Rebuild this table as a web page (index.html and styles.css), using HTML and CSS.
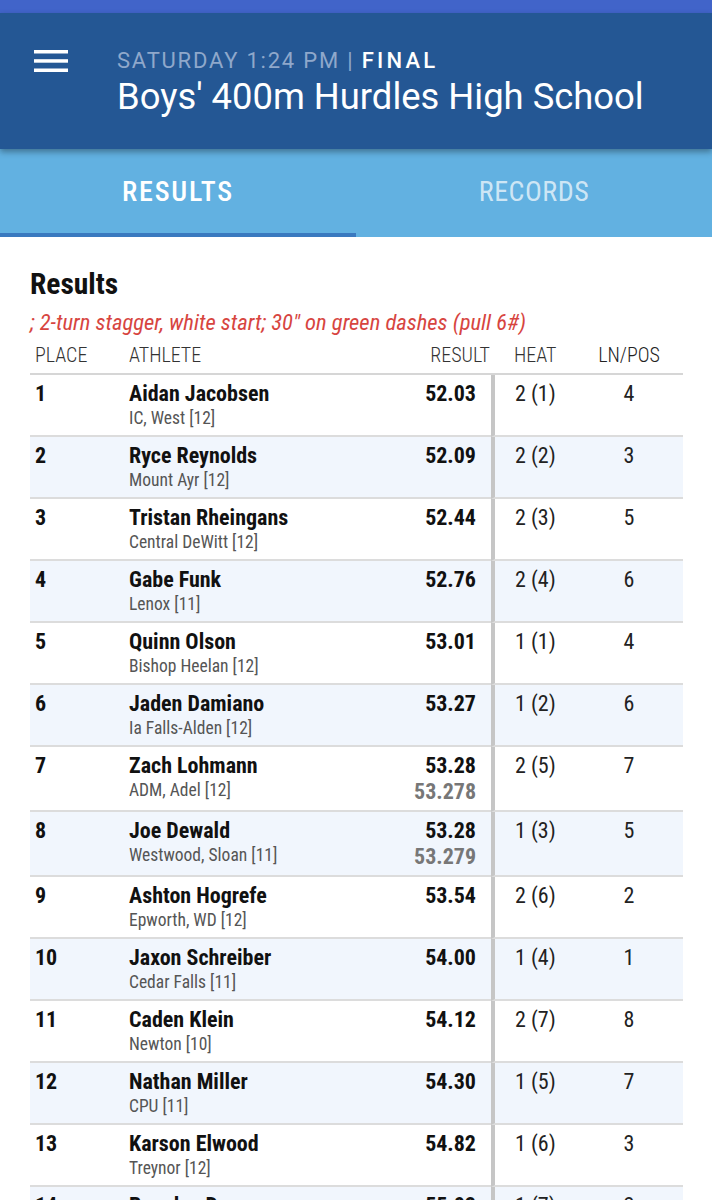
FILE: index.html
```html
<!DOCTYPE html>
<html lang="en">
<head>
<meta charset="utf-8">
<title>Boys' 400m Hurdles High School</title>
<link rel="stylesheet" href="styles.css">
</head>
<body>
<div class="topbar"></div>
<header class="appbar">
  <button class="menu" aria-label="Menu">
    <svg width="34" height="24" viewBox="0 0 34 24"><rect x="0" y="1" width="34" height="3.5" fill="#fff"/><rect x="0" y="10.2" width="34" height="3.5" fill="#fff"/><rect x="0" y="19.5" width="34" height="3.5" fill="#fff"/></svg>
  </button>
  <div class="titles">
    <div class="meta">SATURDAY 1:24 PM | <b>FINAL</b></div>
    <h1 class="title">Boys' 400m Hurdles High School</h1>
  </div>
</header>
<nav class="tabs">
  <div class="tab active">RESULTS</div>
  <div class="tab">RECORDS</div>
</nav>
<main class="content">
  <h2 class="heading">Results</h2>
  <p class="note">; 2-turn stagger, white start; 30" on green dashes (pull 6#)</p>
  <table class="results">
    <thead>
      <tr><th class="c-place">PLACE</th><th class="c-ath">ATHLETE</th><th class="c-res">RESULT</th><th class="c-heat">HEAT</th><th class="c-ln">LN/POS</th></tr>
    </thead>
    <tbody>
      <tr><td class="c-place">1</td><td class="c-ath"><div class="name">Aidan Jacobsen</div><div class="team">IC, West [12]</div></td><td class="c-res"><div class="mark">52.03</div></td><td class="c-heat">2 (1)</td><td class="c-ln">4</td></tr>
      <tr><td class="c-place">2</td><td class="c-ath"><div class="name">Ryce Reynolds</div><div class="team">Mount Ayr [12]</div></td><td class="c-res"><div class="mark">52.09</div></td><td class="c-heat">2 (2)</td><td class="c-ln">3</td></tr>
      <tr><td class="c-place">3</td><td class="c-ath"><div class="name">Tristan Rheingans</div><div class="team">Central DeWitt [12]</div></td><td class="c-res"><div class="mark">52.44</div></td><td class="c-heat">2 (3)</td><td class="c-ln">5</td></tr>
      <tr><td class="c-place">4</td><td class="c-ath"><div class="name">Gabe Funk</div><div class="team">Lenox [11]</div></td><td class="c-res"><div class="mark">52.76</div></td><td class="c-heat">2 (4)</td><td class="c-ln">6</td></tr>
      <tr><td class="c-place">5</td><td class="c-ath"><div class="name">Quinn Olson</div><div class="team">Bishop Heelan [12]</div></td><td class="c-res"><div class="mark">53.01</div></td><td class="c-heat">1 (1)</td><td class="c-ln">4</td></tr>
      <tr><td class="c-place">6</td><td class="c-ath"><div class="name">Jaden Damiano</div><div class="team">Ia Falls-Alden [12]</div></td><td class="c-res"><div class="mark">53.27</div></td><td class="c-heat">1 (2)</td><td class="c-ln">6</td></tr>
      <tr><td class="c-place">7</td><td class="c-ath"><div class="name">Zach Lohmann</div><div class="team">ADM, Adel [12]</div></td><td class="c-res"><div class="mark">53.28</div><div class="mark2">53.278</div></td><td class="c-heat">2 (5)</td><td class="c-ln">7</td></tr>
      <tr><td class="c-place">8</td><td class="c-ath"><div class="name">Joe Dewald</div><div class="team">Westwood, Sloan [11]</div></td><td class="c-res"><div class="mark">53.28</div><div class="mark2">53.279</div></td><td class="c-heat">1 (3)</td><td class="c-ln">5</td></tr>
      <tr><td class="c-place">9</td><td class="c-ath"><div class="name">Ashton Hogrefe</div><div class="team">Epworth, WD [12]</div></td><td class="c-res"><div class="mark">53.54</div></td><td class="c-heat">2 (6)</td><td class="c-ln">2</td></tr>
      <tr><td class="c-place">10</td><td class="c-ath"><div class="name">Jaxon Schreiber</div><div class="team">Cedar Falls [11]</div></td><td class="c-res"><div class="mark">54.00</div></td><td class="c-heat">1 (4)</td><td class="c-ln">1</td></tr>
      <tr><td class="c-place">11</td><td class="c-ath"><div class="name">Caden Klein</div><div class="team">Newton [10]</div></td><td class="c-res"><div class="mark">54.12</div></td><td class="c-heat">2 (7)</td><td class="c-ln">8</td></tr>
      <tr><td class="c-place">12</td><td class="c-ath"><div class="name">Nathan Miller</div><div class="team">CPU [11]</div></td><td class="c-res"><div class="mark">54.30</div></td><td class="c-heat">1 (5)</td><td class="c-ln">7</td></tr>
      <tr><td class="c-place">13</td><td class="c-ath"><div class="name">Karson Elwood</div><div class="team">Treynor [12]</div></td><td class="c-res"><div class="mark">54.82</div></td><td class="c-heat">1 (6)</td><td class="c-ln">3</td></tr>
      <tr><td class="c-place">14</td><td class="c-ath"><div class="name">Brayden Dunn</div><div class="team">Glenwood [12]</div></td><td class="c-res"><div class="mark">55.02</div></td><td class="c-heat">1 (7)</td><td class="c-ln">2</td></tr>
    </tbody>
  </table>
</main>
</body>
</html>
```
FILE: styles.css
```css
* { box-sizing: border-box; }
html, body { margin: 0; padding: 0; }
body {
  width: 712px;
  height: 1200px;
  overflow: hidden;
  background: #fff;
  font-family: "Roboto Condensed", Roboto, "Liberation Sans", sans-serif;
  color: #111;
}
.topbar { height: 13px; background: #4164c9; }
.appbar {
  position: relative;
  z-index: 2;
  height: 136px;
  background: #245794;
  display: flex;
  align-items: flex-start;
  box-shadow: 0 3px 6px rgba(0,0,0,0.35);
}
.menu {
  margin: 36px 0 0 34px;
  padding: 0;
  border: 0;
  background: none;
  width: 34px;
  height: 24px;
  display: block;
}
.menu svg { display: block; }
.titles { margin: 35px 0 0 49px; font-family: Roboto, sans-serif; }
.meta {
  font-size: 22px;
  line-height: 26px;
  letter-spacing: 1.8px;
  color: #8fa8cb;
  font-weight: 400;
}
.meta b { color: #fff; font-weight: 500; letter-spacing: 3.2px; }
.title {
  margin: 1px 0 0;
  font-size: 36.4px;
  line-height: 44px;
  font-weight: 400;
  color: #fff;
}
.tabs {
  height: 88px;
  background: #62b1e1;
  display: flex;
}
.tab {
  flex: 1;
  display: flex;
  align-items: center;
  justify-content: center;
  font-size: 28px;
  letter-spacing: 0.5px;
  font-weight: 400;
  color: rgba(255,255,255,0.7);
  border-bottom: 4px solid transparent;
}
.tab.active { color: #fff; font-weight: 500; letter-spacing: 1.8px; border-bottom-color: #3a79bf; }
.content { padding: 30px 29px 0 30px; }
.heading {
  margin: 0;
  font-size: 29.5px;
  line-height: 34px;
  font-weight: 700;
  color: #111;
}
.note {
  margin: 9px 0 0;
  font-size: 22.6px;
  line-height: 26px;
  font-style: italic;
  color: #d7453f;
}
.results {
  width: 100%;
  table-layout: fixed;
  border-collapse: separate;
  border-spacing: 0;
  margin-top: 0;
}
.results th {
  font-size: 20px;
  font-weight: 300;
  color: #333;
  text-align: left;
  height: 39px;
  padding: 0;
  border-bottom: 2px solid #d6d6d6;
}
.results td {
  vertical-align: top;
  padding: 7px 0 5px;
  border-bottom: 2px solid #dcdcdc;
  font-size: 22px;
  line-height: 24px;
}
.results tbody tr:nth-child(even) td { background: #f1f6fd; }
.results .c-place { width: 99px; padding-left: 5px; }
.results td.c-place { font-weight: 700; }
.name { font-weight: 700; color: #111; }
.team { font-size: 17.5px; color: #555; line-height: 24px; }
.results .c-res { width: 91px; text-align: right; padding-right: 15px; }
.results th.c-res { padding-right: 1px; }
.mark { font-weight: 700; }
.mark2 { font-weight: 700; color: #777; line-height: 27px; }
.results .c-heat { width: 84px; }
.results td.c-heat { border-left: 4px solid #c6c6c6; color: #222; padding-left: 20px; }
.results th.c-heat { padding-left: 23px; }
.results .c-ln { width: 108px; text-align: center; color: #222; }
```
